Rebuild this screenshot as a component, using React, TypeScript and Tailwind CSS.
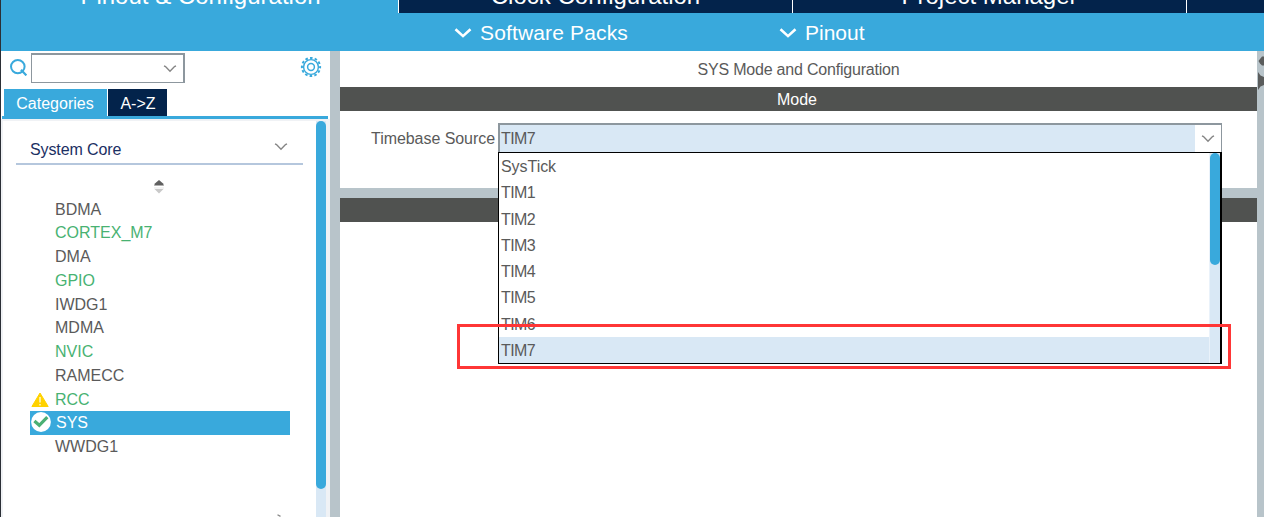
import React from "react";

type Peripheral = { name: string; tone: "default" | "configured"; status?: "warning" | "ok" };

const peripherals: Peripheral[] = [
  { name: "BDMA", tone: "default" },
  { name: "CORTEX_M7", tone: "configured" },
  { name: "DMA", tone: "default" },
  { name: "GPIO", tone: "configured" },
  { name: "IWDG1", tone: "default" },
  { name: "MDMA", tone: "default" },
  { name: "NVIC", tone: "configured" },
  { name: "RAMECC", tone: "default" },
  { name: "RCC", tone: "configured", status: "warning" },
  { name: "SYS", tone: "default", status: "ok" },
  { name: "WWDG1", tone: "default" },
];

const timebaseOptions = ["SysTick", "TIM1", "TIM2", "TIM3", "TIM4", "TIM5", "TIM6", "TIM7"];

function ThinChevron({ className = "" }: { className?: string }) {
  return (
    <svg width="14" height="9" viewBox="0 0 14 9" className={className} fill="none" stroke="#858585" strokeWidth="1.4">
      <path d="M1 1.8 L2.5 2.5 L7 7.3 L11.5 2.5 L13 1.8" />
    </svg>
  );
}

function BoldChevron() {
  return (
    <svg width="18" height="12" viewBox="0 0 18 12" fill="none" stroke="#fff" strokeWidth="2.6">
      <path d="M1.5 3.3 L9 10.1 L16.5 3.3" />
    </svg>
  );
}

function SearchIcon() {
  return (
    <svg width="18" height="18" viewBox="0 0 18 18" fill="none" stroke="#39a9dc">
      <ellipse cx="8.8" cy="8.6" rx="6.8" ry="6.6" strokeWidth="2" />
      <path d="M12 11.8 L17.4 17.4" strokeWidth="2.2" />
    </svg>
  );
}

function GearIcon() {
  return (
    <svg width="22" height="22" viewBox="0 0 22 22" fill="none" stroke="#39a9dc">
      <circle cx="11" cy="11" r="3.4" strokeWidth="1.5" />
      <circle cx="11" cy="11" r="7.4" strokeWidth="1.4" />
      <circle cx="11" cy="11" r="9.1" strokeWidth="2" strokeDasharray="2.6 2.165" strokeDashoffset="1.3" />
    </svg>
  );
}

function SortIcon() {
  return (
    <svg width="12" height="14" viewBox="0 0 12 14">
      <path d="M1 5.6 L2.2 3.2 L6 0 L9.8 3.2 L11 5.6 Z" fill="#606060" />
      <path d="M1 7.6 H11 V8.4 H1 Z" fill="#e2e2e2" />
      <path d="M1.5 9 H10.5 L6 13.4 Z" fill="#c9c9c9" />
    </svg>
  );
}

function WarningIcon() {
  return (
    <svg width="18" height="16" viewBox="0 0 18 16">
      <path d="M9 1 L17.2 14.5 H0.9 Z" fill="#ffd200" stroke="#ffd200" strokeWidth="1" strokeLinejoin="round" />
      <path d="M9 5 V10.6 M9 12 V13.4" stroke="#fff" strokeWidth="1.2" />
    </svg>
  );
}

function CheckIcon() {
  return (
    <svg width="20" height="20" viewBox="0 0 20 20" className="relative top-[-1px]">
      <circle cx="10" cy="10" r="9.9" fill="#fff" />
      <path d="M3.4 9 L8.3 13.3 L16.3 5.2" fill="none" stroke="#4bb074" strokeWidth="3.2" />
    </svg>
  );
}

function MainTabs() {
  return (
    <div className="flex h-[13px] items-stretch overflow-hidden text-[24px] leading-[24px] text-white">
      <div className="flex w-[398px] items-end justify-center border-r border-white bg-[#39a9dc] pb-[5px] pl-[2px]">Pinout &amp; Configuration</div>
      <div className="flex w-[394px] items-end justify-center border-r border-white bg-[#03234b] pb-[5px]">Clock Configuration</div>
      <div className="flex w-[394px] items-end justify-center border-r border-white bg-[#03234b] pb-[5px]">Project Manager</div>
      <div className="flex-1 bg-[#03234b]" />
    </div>
  );
}

function MenuBar() {
  return (
    <div className="flex h-[38px] items-center bg-[#39a9dc] pl-[453px] text-[21px] leading-6 text-white">
      <div className="flex w-[325px] items-center gap-[8px]">
        <BoldChevron />
        <span className="pt-px tracking-[0.15px]">Software Packs</span>
      </div>
      <div className="flex items-center gap-[8px]">
        <BoldChevron />
        <span className="pt-px">Pinout</span>
      </div>
    </div>
  );
}

function PeripheralRow({ item }: { item: Peripheral }) {
  const selected = item.name === "SYS";
  const color = selected ? "text-white" : item.tone === "configured" ? "text-[#48b272]" : "text-[#5a5a5a]";
  return (
    <div className={"flex h-[23.75px] w-[260px] shrink-0 items-center " + (selected ? "bg-[#39a9dc] " : "") + color}>
      <span className={"flex shrink-0 items-center justify-start pl-px " + (selected ? "w-[26px]" : "w-[25px]")}>
        {item.status === "warning" && <WarningIcon />}
        {item.status === "ok" && <CheckIcon />}
      </span>
      {item.name}
    </div>
  );
}

function Sidebar() {
  return (
    <aside className="flex w-[329px] shrink-0 flex-col bg-white">
      <div className="flex h-[38px] shrink-0 items-start pl-[8px] pt-[2px]">
        <div className="mr-[4px] mt-[5px]">
          <SearchIcon />
        </div>
        <div className="flex h-[30px] w-[154px] items-center justify-end border border-r-2 border-t-2 border-[#8d979e] pr-[6px]">
          <ThinChevron />
        </div>
        <div className="ml-[115px] mt-[3px]">
          <GearIcon />
        </div>
      </div>
      <div className="flex h-[27px] shrink-0 gap-px pl-[3px] text-white">
        <div className="flex w-[103px] items-center justify-center bg-[#39a9dc] pr-px pt-[3px]">Categories</div>
        <div className="flex w-[59px] items-center justify-center bg-[#03234b] pl-px pt-[3px]">A-&gt;Z</div>
      </div>
      <div className="ml-px mr-[2px] h-[3px] shrink-0 bg-[#39a9dc]" />
      <div className="flex min-h-0 flex-1 border-l-2 border-r-4 border-t-2 border-[#f0f2f5]">
        <div className="flex flex-1 flex-col overflow-hidden">
          <div className="ml-[13px] mr-[13px] flex h-[44px] shrink-0 items-center justify-between border-b-2 border-[#b5c7dd] pl-[14px] pr-[15px] pt-[15px] text-[#1b2f63]">
            <span className="tracking-[-0.1px]">System Core</span>
            <ThinChevron className="mb-[6px]" />
          </div>
          <div className="ml-[150px] mt-[15px] h-[17.7px] shrink-0">
            <SortIcon />
          </div>
          <div className="ml-[27px] flex shrink-0 flex-col">
            {peripherals.map((item) => (
              <PeripheralRow key={item.name} item={item} />
            ))}
          </div>
          <div className="ml-[274px] mt-[55px] shrink-0">
            <svg width="8" height="6" viewBox="0 0 8 6" fill="none" stroke="#888" strokeWidth="1.3">
              <path d="M0.5 0.7 L3.5 2.4" />
            </svg>
          </div>
        </div>
        <div className="w-[10px] bg-[#d9e8f5]">
          <div className="h-[368px] rounded-full bg-[#39a9dc]" />
        </div>
      </div>
    </aside>
  );
}

function TimebaseSelect() {
  return (
    <div className="relative h-[30px] w-[724px]">
      <div className="flex h-[29px] border-l-2 border-r border-t-2 border-[#8d979e]">
        <div className="flex flex-1 items-center bg-[#d9e8f5] pl-px tracking-[-0.6px]">TIM7</div>
        <div className="flex w-[26px] items-center justify-center">
          <ThinChevron />
        </div>
      </div>
      <div className="absolute left-0 top-[29px] z-10 flex h-[212px] w-[724px] overflow-hidden border border-r-2 border-black bg-white">
        <div className="flex-1">
          {timebaseOptions.map((option) => (
            <div
              key={option}
              className={
                "flex h-[26.25px] items-center pl-[2px] pt-[2px] " +
                (option === "TIM7" ? "bg-[#d9e8f5] " : "") +
                (option === "SysTick" ? "tracking-[-0.05px]" : "tracking-[-0.6px]")
              }
            >
              {option}
            </div>
          ))}
        </div>
        <div className="w-[11px] border-l border-[#eaf2fa] bg-[#d9e8f5]">
          <div className="h-[112px] rounded-full bg-[#39a9dc]" />
        </div>
      </div>
    </div>
  );
}

export default function App() {
  return (
    <div className="relative flex h-[517px] w-[1264px] flex-col overflow-hidden border-l border-[#2b2f36] bg-white font-['Liberation_Sans',Arial,sans-serif] text-[16px] leading-[18px] text-[#5a5a5a]">
      <MainTabs />
      <MenuBar />
      <div className="flex min-h-0 flex-1">
        <Sidebar />
        <div className="w-[10px] shrink-0 bg-[#b8c4ca]" />
        <main className="flex w-[917px] shrink-0 flex-col">
          <div className="flex h-[36px] items-center justify-center pt-[2px] tracking-[-0.2px]">SYS Mode and Configuration</div>
          <div className="flex h-[24px] items-center justify-center bg-[#505250] pr-[3px] pt-[2px] text-white">Mode</div>
          <div className="flex h-[77px] items-start pl-[31px] pt-[12px]">
            <span className="w-[127px] shrink-0 pt-[7px] tracking-[-0.05px]">Timebase Source</span>
            <TimebaseSelect />
          </div>
          <div className="h-[10px] bg-[#b8c4ca]" />
          <div className="h-[24px] bg-[#505250]" />
        </main>
        <div className="flex-1 overflow-hidden bg-[#b8c4ca]">
          <svg width="7" height="42" viewBox="0 0 7 42" className="block" fill="#5a5c5c">
            <path d="M7 5.5 H5 L3 8 L1.5 10 L3 12.5 L5 14.5 H7 Z" />
            <path d="M1 21 L3.5 24.5 L7 26 V34 L3.5 35.5 L1 39 Z" />
          </svg>
        </div>
      </div>
      <div className="pointer-events-none absolute left-[456px] top-[324px] z-20 h-[45px] w-[774px] border-3 border-[#ff3636]" />
    </div>
  );
}
